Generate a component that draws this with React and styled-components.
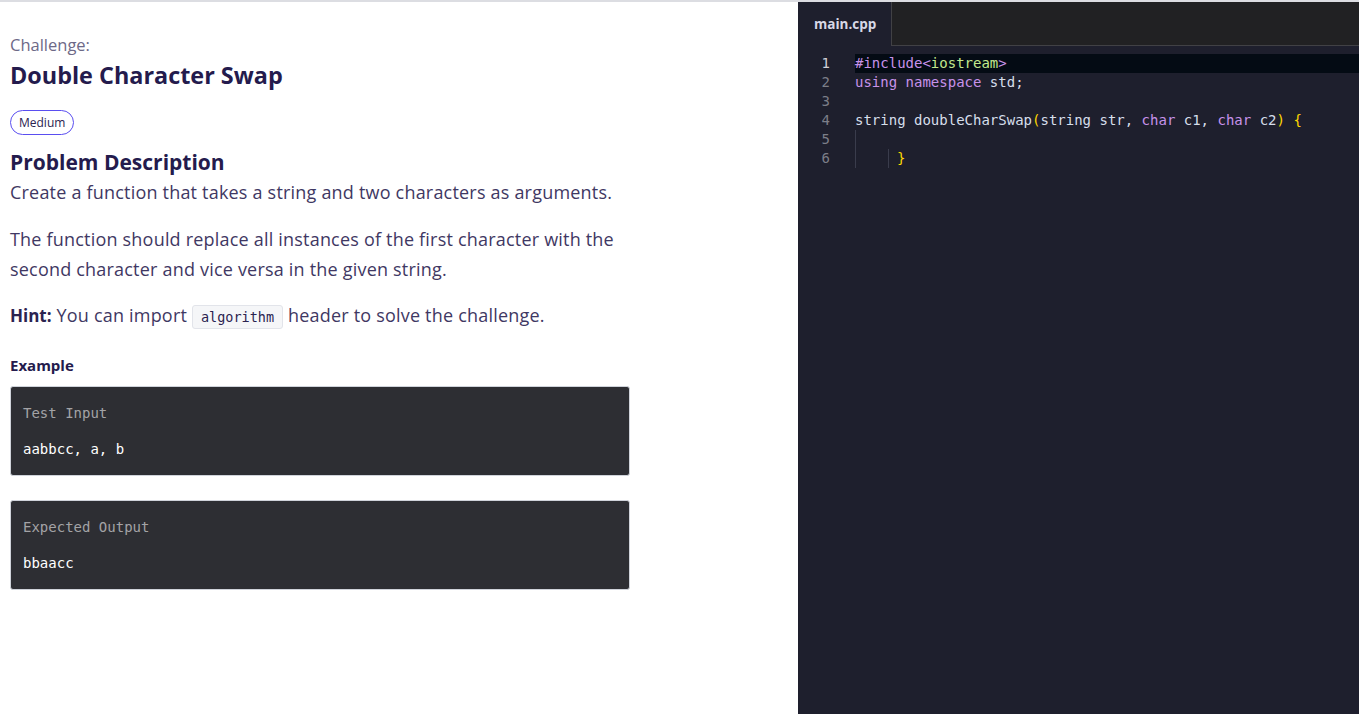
import React from "react";
import styled, { createGlobalStyle } from "styled-components";

const GlobalStyle = createGlobalStyle`
  html, body {
    margin: 0;
    padding: 0;
    background: #ffffff;
  }
  * {
    box-sizing: border-box;
  }
`;

const Page = styled.div`
  display: flex;
  height: 714px;
  border-top: 2px solid #dcdde2;
  overflow: hidden;
`;

const ChallengePanel = styled.div`
  width: 798px;
  flex-shrink: 0;
  padding: 33px 10px 0 10px;
  font-family: "Open Sans", "Noto Sans", sans-serif;
  color: #2b2350;
`;

const Eyebrow = styled.div`
  font-size: 16.5px;
  line-height: 20px;
  color: #6d6987;
`;

const Title = styled.h1`
  margin: 5px 0 0;
  font-size: 23.4px;
  line-height: 30px;
  font-weight: 700;
  color: #241b4d;
`;

const Badge = styled.span`
  display: inline-flex;
  align-items: center;
  height: 25px;
  margin-top: 20px;
  padding: 0 8px;
  border: 1px solid #5a4ef0;
  border-radius: 13px;
  font-size: 12px;
  color: #2b2350;
`;

const SectionTitle = styled.h2`
  margin: ${(p) => p.$top || 13}px 0 0;
  font-size: ${(p) => p.$size || 21}px;
  line-height: ${(p) => p.$lh || 28}px;
  font-weight: 700;
  color: #241b4d;
`;

const Paragraph = styled.p`
  margin: ${(p) => p.$top || 16}px 0 0;
  max-width: 640px;
  font-size: 18px;
  letter-spacing: 0.2px;
  line-height: 30px;
  color: #3f3863;
`;

const Strong = styled.strong`
  font-size: 17px;
  letter-spacing: 0;
  font-weight: 700;
  color: #2b2350;
`;

const InlineCode = styled.code`
  display: inline-block;
  padding: 0 8px;
  line-height: 22px;
  letter-spacing: 0;
  border: 1px solid #e2e4ea;
  border-radius: 3px;
  background: #f5f6f8;
  font-family: "DejaVu Sans Mono", monospace;
  font-size: 13.5px;
  color: #2b2350;
`;

const ExampleBox = styled.div`
  width: 620px;
  margin-top: ${(p) => p.$top}px;
  padding: 16px 12px;
  background: #2d2e33;
  border: 1px solid #cfd3da;
  border-radius: 3px;
  font-family: "DejaVu Sans Mono", monospace;
  font-size: 14px;
  line-height: 20px;
  display: flex;
  flex-direction: column;
  gap: 16px;
`;

const BoxLabel = styled.div`
  color: #a3a3a6;
`;

const BoxValue = styled.div`
  color: #ffffff;
`;

const EditorPanel = styled.div`
  flex: 1;
  display: flex;
  flex-direction: column;
  background: #1e1f2d;
`;

const TabBar = styled.div`
  display: flex;
  height: 44px;
`;

const Tab = styled.div`
  width: 93px;
  padding-left: 16px;
  display: flex;
  align-items: center;
  font-family: "Open Sans", "Noto Sans", sans-serif;
  font-weight: 700;
  font-size: 13.5px;
  color: #d8d8e6;
  background: #1e1f2d;
`;

const TabFiller = styled.div`
  flex: 1;
  background: #212123;
  border-left: 1px solid #414145;
  border-bottom: 1px solid #414145;
`;

const Code = styled.div`
  padding-top: 8px;
  font-family: "DejaVu Sans Mono", monospace;
  font-size: 14px;
`;

const Line = styled.div`
  display: flex;
  height: 19px;
  line-height: 19px;
`;

const LineNo = styled.div`
  width: 32px;
  text-align: right;
  color: ${(p) => (p.$active ? "#d0d0d8" : "#7c7e88")};
`;

const LineText = styled.div`
  flex: 1;
  margin-left: 25px;
  white-space: pre;
  color: #d6deeb;
  background: ${(p) => (p.$active ? "#040b14" : "transparent")};
`;

const Guide = styled.span`
  display: inline-block;
  vertical-align: top;
  width: ${(p) => p.$w}px;
  height: 19px;
  border-left: 1px solid #3a3c4c;
`;

const Kw = styled.span`
  color: #c792ea;
`;
const Str = styled.span`
  color: #c3e88d;
`;
const Br = styled.span`
  color: #ffd700;
`;

const codeLines = [
  <>
    <Kw>#include&lt;</Kw>
    <Str>iostream</Str>
    <Kw>&gt;</Kw>
  </>,
  <>
    <Kw>using namespace</Kw> std;
  </>,
  null,
  <>
    {"string doubleCharSwap"}
    <Br>(</Br>
    {"string str, "}
    <Kw>char</Kw>
    {" c1, "}
    <Kw>char</Kw>
    {" c2"}
    <Br>)</Br>
    {" "}
    <Br>{"{"}</Br>
  </>,
  <Guide $w={34} />,
  <>
    <Guide $w={33} />
    <Guide $w={9} />
    <Br>{"}"}</Br>
  </>,
];

const App = () => {
  return (
    <>
      <GlobalStyle />
      <Page>
        <ChallengePanel>
          <Eyebrow>Challenge:</Eyebrow>
          <Title>Double Character Swap</Title>
          <Badge>Medium</Badge>
          <SectionTitle>Problem Description</SectionTitle>
          <Paragraph $top={1}>
            Create a function that takes a string and two characters as arguments.
          </Paragraph>
          <Paragraph $top={17}>
            The function should replace all instances of the first character with the
            second character and vice versa in the given string.
          </Paragraph>
          <Paragraph $top={16}>
            <Strong>Hint:</Strong> You can import <InlineCode>algorithm</InlineCode> header
            to solve the challenge.
          </Paragraph>
          <SectionTitle $top={24} $size={15} $lh={20}>
            Example
          </SectionTitle>
          <ExampleBox $top={11}>
            <BoxLabel>Test Input</BoxLabel>
            <BoxValue>aabbcc, a, b</BoxValue>
          </ExampleBox>
          <ExampleBox $top={24}>
            <BoxLabel>Expected Output</BoxLabel>
            <BoxValue>bbaacc</BoxValue>
          </ExampleBox>
        </ChallengePanel>
        <EditorPanel>
          <TabBar>
            <Tab>main.cpp</Tab>
            <TabFiller />
          </TabBar>
          <Code>
            {codeLines.map((content, i) => (
              <Line key={i}>
                <LineNo $active={i === 0}>{i + 1}</LineNo>
                <LineText $active={i === 0}>{content}</LineText>
              </Line>
            ))}
          </Code>
        </EditorPanel>
      </Page>
    </>
  );
};

export default App;
